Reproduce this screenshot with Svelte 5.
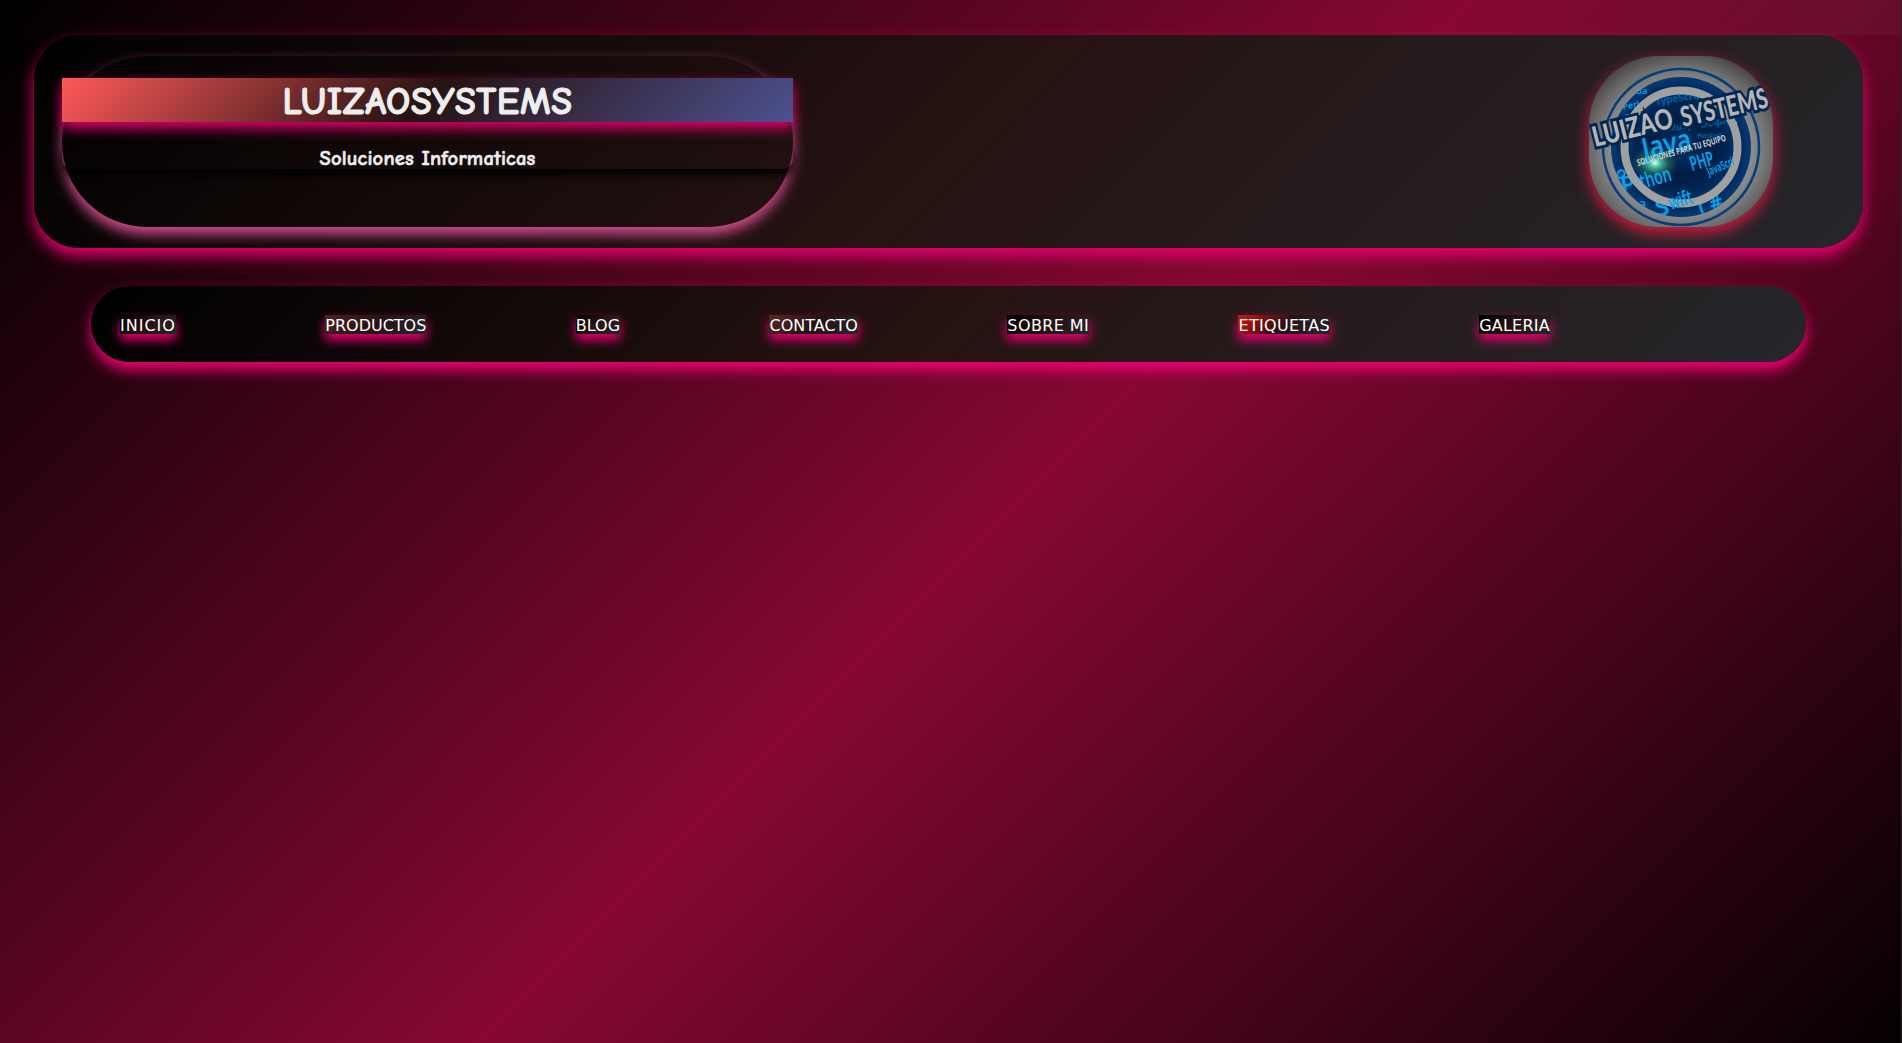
<script>
  const links = [
    { text: 'INICIO', tone: '#000', track: 1 },
    { text: 'PRODUCTOS', tone: '#4a2222', track: 0 },
    { text: 'BLOG', tone: '#000', track: 0 },
    { text: 'CONTACTO', tone: '#5a2626', track: 0 },
    { text: 'SOBRE MI', tone: '#000', track: 0.4 },
    { text: 'ETIQUETAS', tone: '#dc0f0f', track: 0.3 },
    { text: 'GALERIA', tone: '#000', track: 0.2 }
  ];
</script>

<div class="page">
  <div class="strip"></div>
  <div class="content">
    <header>
      <div class="brand">
        <h1>LUIZAOSYSTEMS</h1>
        <h3>Soluciones Informaticas</h3>
      </div>
      <div class="logo">
        <svg viewBox="0 0 184 171" width="184" height="171">
          <defs>
            <radialGradient id="face" cx="50%" cy="54%" r="58%">
              <stop offset="0" stop-color="#b4b4b4" />
              <stop offset=".6" stop-color="#989898" />
              <stop offset=".84" stop-color="#6c6c6c" />
              <stop offset="1" stop-color="#464646" />
            </radialGradient>
            <radialGradient id="blue">
              <stop offset="0" stop-color="#003468" />
              <stop offset=".5" stop-color="#011d42" />
              <stop offset=".82" stop-color="#002655" />
              <stop offset="1" stop-color="#033a75" />
            </radialGradient>
            <radialGradient id="flare">
              <stop offset="0" stop-color="#f0ffe0" />
              <stop offset=".2" stop-color="#51c9b4" />
              <stop offset=".6" stop-color="#286b57" stop-opacity=".7" />
              <stop offset="1" stop-color="#286b57" stop-opacity="0" />
            </radialGradient>
            <clipPath id="disc"><circle cx="92" cy="91" r="70" /></clipPath>
            <clipPath id="core"><circle cx="92" cy="91" r="53" /></clipPath>
          </defs>
          <rect width="184" height="171" fill="url(#face)" />
          <circle cx="92" cy="91" r="78" fill="none" stroke="#023f7c" stroke-width="2.5" />
          <circle cx="92" cy="91" r="70" fill="url(#blue)" />
          <g clip-path="url(#disc)" class="code">
            <text x="42" y="38" font-size="9">ada</text>
            <text x="34" y="54" font-size="9" transform="rotate(-10 34 54)">Perl</text>
            <text x="31" y="75" font-size="23">Go</text>
            <text x="14" y="113" font-size="17" transform="rotate(30 14 113)">c o</text>
            <text x="33" y="138" font-size="24" transform="rotate(-10 33 138)">P</text>
            <text x="50" y="152" font-size="12">a</text>
            <text x="137" y="79" font-size="19">C</text>
            <text x="69" y="161" font-size="24" transform="rotate(-16 69 161)">S</text>
            <text x="112" y="159" font-size="20" transform="rotate(-18 112 159)">( #</text>
          </g>
          <circle cx="92" cy="91" r="56.5" fill="url(#blue)" stroke="#a0a0a0" stroke-width="8" />
          <ellipse cx="66" cy="107" rx="23" ry="18" fill="url(#flare)" />
          <g class="code" clip-path="url(#core)">
            <text x="67" y="49" font-size="10" transform="rotate(-9 67 49)" opacity=".5">TypeScript</text>
            <text x="82" y="75" font-size="9" transform="rotate(-8 82 75)" opacity=".5">Ruby</text>
            <text x="112" y="72" font-size="10" transform="rotate(-10 112 72)" opacity=".5">Delphi</text>
            <text x="108" y="82" font-size="7" opacity=".5">Haskell</text>
            <text x="55" y="103" font-size="29" textLength="50" lengthAdjust="spacingAndGlyphs" transform="rotate(-12 55 103)">Java</text>
            <text x="103" y="115" font-size="20" textLength="24" lengthAdjust="spacingAndGlyphs" transform="rotate(-16 103 115)">PHP</text>
            <text x="53" y="133" font-size="21" textLength="32" lengthAdjust="spacingAndGlyphs" transform="rotate(-16 53 133)">thon</text>
          </g>
          <text class="code" x="82" y="154" font-size="20" textLength="24" lengthAdjust="spacingAndGlyphs" transform="rotate(-18 82 154)">wift</text>
          <text class="code" x="120" y="120" font-size="12" textLength="28" lengthAdjust="spacingAndGlyphs" transform="rotate(-24 120 120)">JavaScri</text>
          <text class="tag" x="49" y="110" textLength="92" lengthAdjust="spacingAndGlyphs" transform="rotate(-16 49 110)">SOLUCIONES PARA TU EQUIPO</text>
          <text class="name" x="6" y="91" textLength="82" lengthAdjust="spacingAndGlyphs" transform="rotate(-14 6 91)">LUIZAO</text>
          <text class="name" x="94" y="71" textLength="89" lengthAdjust="spacingAndGlyphs" transform="rotate(-13 94 71)">SYSTEMS</text>
        </svg>
      </div>
    </header>
    <nav>
      {#each links as link}
        <a href="#top" style="--tone: {link.tone}; --track: {link.track}px">{link.text}</a>
      {/each}
    </nav>
  </div>
</div>

<style>
  :global(body) { margin: 0; overflow: hidden; }
  .page {
    box-sizing: border-box;
    height: 1043px;
    display: flex;
    flex-direction: column;
    overflow: hidden;
    border-right: 1px solid #27272b;
    font-family: "DejaVu Sans", sans-serif;
    background: #000;
  }
  .strip { height: 35px; flex: none; background: linear-gradient(135deg, #000, #860833 76%, #640f29); }
  .content { height: 1069px; flex: none; background: linear-gradient(135deg, #000, #860833 50%, #000); }
  header {
    box-sizing: border-box;
    margin: 0 38px 0 34px;
    height: 213px;
    padding: 21px 90px 21px 28px;
    display: flex;
    justify-content: space-between;
    border-radius: 45px;
    background: linear-gradient(135deg, #000, #261312 50%, #25262b);
    box-shadow: 0 8px 15px #e6006e;
  }
  .brand {
    width: 731px;
    height: 171px;
    border-radius: 85px;
    box-shadow: 0 7px 14px #d95095;
    text-align: center;
    color: #eee;
    font-family: "Comic Sans MS", "Comic Neue", "Comic Relief", cursive, sans-serif;
  }
  h1 {
    margin: 22px 0 0;
    height: 44px;
    line-height: 49px;
    font-size: 38px;
    letter-spacing: .6px;
    -webkit-text-stroke: 1px #eee;
    background: linear-gradient(135deg, #ff5959, #261312 50%, #4d5190);
    box-shadow: 0 6px 12px #e6006e;
  }
  h3 {
    margin: 22px 0 0;
    height: 25px;
    line-height: 29px;
    font-size: 20.5px;
    letter-spacing: .2px;
    -webkit-text-stroke: .6px #eee;
    border-radius: 10px;
    box-shadow: 0 6px 10px #000;
  }
  .logo { width: 184px; height: 171px; border-radius: 69px; box-shadow: 0 6px 15px #d51a43; }
  svg { display: block; border-radius: 69px; overflow: hidden; }
  .code { fill: #03a4ef; font-family: "Noto Sans", sans-serif; font-weight: 600; }
  .tag { fill: #d0d0d0; font: bold 9px "Open Sans", sans-serif; }
  .name { fill: #b5b5b5; stroke: #022650; stroke-width: 6px; paint-order: stroke; font: 900 28px Lato, sans-serif; }
  nav {
    box-sizing: border-box;
    height: 76px;
    margin: 38px 95px 0 91px;
    padding: 29px 29px 0;
    display: flex;
    align-items: flex-start;
    gap: 149.4px;
    border-radius: 38px;
    background: linear-gradient(135deg, #000, #261312 50%, #25262b);
    box-shadow: 0 8px 14px #ee0072;
  }
  a {
    height: 19px;
    line-height: 22px;
    font-size: 16px;
    letter-spacing: var(--track);
    color: #fff;
    text-decoration: none;
    white-space: nowrap;
    background: linear-gradient(135deg, var(--tone), #261312 50%, #25262b);
    box-shadow: 0 6px 11px #e6006e;
  }
</style>
